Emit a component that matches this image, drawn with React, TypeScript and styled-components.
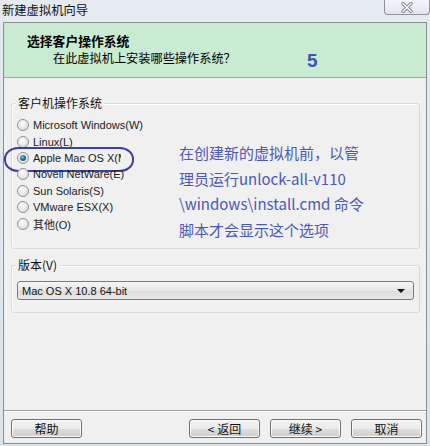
import React from "react";
import styled, { createGlobalStyle } from "styled-components";

const Global = createGlobalStyle`
  html, body { margin: 0; padding: 0; background: #dfe6ed; }
  body { width: 430px; height: 446px; overflow: hidden; }
  * { box-sizing: border-box; }
`;

const UI = `"Liberation Sans", "Noto Sans CJK SC", sans-serif`;
const CJK = `"Noto Sans CJK SC", "Liberation Sans", sans-serif`;

const Window = styled.div`
  width: 430px;
  height: 446px;
  display: flex;
  flex-direction: column;
  background: linear-gradient(#e4eaf0, #dbe3eb);
  font-family: ${UI};
  color: #000;
`;

const TitleBar = styled.div`
  height: 22px;
  display: flex;
  align-items: flex-start;
  padding-left: 2px;
`;

const TitleText = styled.div`
  font-family: ${CJK};
  font-size: 12.3px;
  line-height: 20px;
  color: #111;
`;

const CloseBtn = styled.div`
  margin-left: auto;
  width: 46px;
  height: 15px;
  border: 1px solid #8d939b;
  border-top: none;
  border-radius: 0 0 4px 4px;
  background: linear-gradient(#f4f6f8, #e2e6ea);
  display: flex;
  align-items: center;
  justify-content: center;
`;

const Frame = styled.div`
  flex: 1;
  margin: 0 3px 2px 3px;
  border: 1px solid #8a8f96;
  background: #f0f0f0;
  display: flex;
  flex-direction: column;
`;

const Header = styled.div`
  height: 55px;
  background: #c9ebd2;
  border-bottom: 1px solid #a3a8a5;
  padding: 10px 0 0 23px;
  display: flex;
  flex-direction: column;
`;

const HeaderTitle = styled.div`
  font-family: ${CJK};
  font-weight: bold;
  font-size: 12.8px;
  line-height: 15px;
`;

const HeaderSubRow = styled.div`
  display: flex;
  align-items: center;
  padding-left: 26px;
  height: 20px;
`;

const HeaderSub = styled.div`
  font-family: ${CJK};
  font-size: 12.2px;
  width: 254px;
`;

const StepNumber = styled.div`
  font-family: "Liberation Sans", sans-serif;
  font-weight: bold;
  font-size: 19px;
  color: #3b55b4;
  margin-top: 6px;
`;

const Body = styled.div`
  flex: 1;
  padding: 25px 6px 0 7px;
  display: flex;
  flex-direction: column;
  gap: 16px;
`;

const GroupBox = styled.div<{ $pt: number; $pb: number }>`
  position: relative;
  border: 1px solid #d3d9de;
  border-radius: 3px;
  box-shadow: inset 1px 1px 0 #ffffff;
  padding: ${(p) => p.$pt}px 5px ${(p) => p.$pb}px 5px;
`;

const Legend = styled.div`
  position: absolute;
  top: -9px;
  left: 4px;
  padding: 0 2px;
  background: #f0f0f0;
  font-family: ${CJK};
  font-size: 12px;
  line-height: 16px;
  color: #111;
`;

const GuestRow = styled.div`
  display: flex;
`;

const RadioList = styled.div`
  width: 162px;
  display: flex;
  flex-direction: column;
`;

const RadioRow = styled.div`
  position: relative;
  height: 16.4px;
  display: flex;
  align-items: center;
  gap: 4px;
  font-size: 11px;
  white-space: nowrap;
`;

const RadioCircle = styled.span<{ $checked?: boolean }>`
  width: 12px;
  height: 12px;
  border-radius: 50%;
  border: 1px solid #8f9397;
  background: radial-gradient(circle at 40% 35%, #fdfdfd 0%, #e6e7e8 55%, #cfd1d3 100%);
  display: flex;
  align-items: center;
  justify-content: center;
  flex-shrink: 0;
  &::after {
    content: "";
    display: ${(p) => (p.$checked ? "block" : "none")};
    width: 6px;
    height: 6px;
    border-radius: 50%;
    background: radial-gradient(circle at 40% 35%, #7fd6f0 0%, #1d6f99 45%, #0c3b5e 100%);
  }
`;

const RadioLabel = styled.span<{ $clip?: boolean }>`
  font-family: ${UI};
  color: #1a1a1a;
  overflow: hidden;
  max-width: ${(p) => (p.$clip ? "88px" : "none")};
`;

const Highlight = styled.div`
  position: absolute;
  left: -13px;
  top: -3px;
  width: 130px;
  height: 25px;
  border: 2.5px solid #3d409d;
  border-radius: 14px / 12px;
  pointer-events: none;
`;

const Note = styled.div`
  padding-top: 23px;
  font-family: ${CJK};
  font-size: 15px;
  line-height: 25.6px;
  color: #4b58b6;
  white-space: nowrap;
`;

const Select = styled.div`
  height: 19px;
  border: 1px solid #7a7a7a;
  border-radius: 3px;
  background: linear-gradient(#f6f6f6, #e6e6e6 50%, #dcdcdc 51%, #e8e8e8);
  display: flex;
  align-items: center;
  padding: 0 5px 0 4px;
  font-size: 11px;
  color: #111;
`;

const SelectText = styled.span`
  flex: 1;
`;

const Arrow = styled.span`
  width: 0;
  height: 0;
  border-left: 4px solid transparent;
  border-right: 4px solid transparent;
  border-top: 4px solid #111;
  margin-right: 3px;
`;

const Footer = styled.div`
  border-top: 1px solid #a0a0a0;
  box-shadow: inset 0 1px 0 #ffffff;
  padding: 8px 4px 5px 7px;
  display: flex;
  gap: 10px;
`;

const Button = styled.div<{ $push?: boolean }>`
  width: 71px;
  height: 19px;
  border: 1px solid #707070;
  border-radius: 3px;
  background: linear-gradient(#f2f2f2, #ebebeb 50%, #dddddd 51%, #cfcfcf);
  box-shadow: inset 0 0 0 1px #fbfbfb;
  display: flex;
  align-items: center;
  justify-content: center;
  font-family: ${CJK};
  font-size: 12px;
  color: #111;
  margin-left: ${(p) => (p.$push ? "auto" : "0")};
`;

const options = [
  "Microsoft Windows(W)",
  "Linux(L)",
  "Apple Mac OS X(M",
  "Novell NetWare(E)",
  "Sun Solaris(S)",
  "VMware ESX(X)",
  "其他(O)",
];

export default function App() {
  return (
    <>
      <Global />
      <Window>
        <TitleBar>
          <TitleText>新建虚拟机向导</TitleText>
          <CloseBtn>
            <svg width="14" height="11" viewBox="0 0 14 11">
              <path d="M3 1.5 L11 9.5 M11 1.5 L3 9.5" stroke="#7d8590" strokeWidth="3.2" strokeLinecap="round" />
              <path d="M3 1.5 L11 9.5 M11 1.5 L3 9.5" stroke="#ffffff" strokeWidth="1.4" strokeLinecap="round" />
            </svg>
          </CloseBtn>
        </TitleBar>
        <Frame>
          <Header>
            <HeaderTitle>选择客户操作系统</HeaderTitle>
            <HeaderSubRow>
              <HeaderSub>在此虚拟机上安装哪些操作系统？</HeaderSub>
              <StepNumber>5</StepNumber>
            </HeaderSubRow>
          </Header>
          <Body>
            <GroupBox $pt={13} $pb={6}>
              <Legend>客户机操作系统</Legend>
              <GuestRow>
                <RadioList>
                  {options.map((o, i) => (
                    <RadioRow key={o}>
                      <RadioCircle $checked={i === 2} />
                      <RadioLabel $clip={i === 2}>{o}</RadioLabel>
                      {i === 2 && <Highlight />}
                    </RadioRow>
                  ))}
                </RadioList>
                <Note>
                  <div>在创建新的虚拟机前，以管</div>
                  <div>理员运行unlock-all-v110</div>
                  <div>\windows\install.cmd 命令</div>
                  <div>脚本才会显示这个选项</div>
                </Note>
              </GuestRow>
            </GroupBox>
            <GroupBox $pt={15} $pb={12}>
              <Legend>版本(V)</Legend>
              <Select>
                <SelectText>Mac OS X 10.8 64-bit</SelectText>
                <Arrow />
              </Select>
            </GroupBox>
          </Body>
          <Footer>
            <Button>帮助</Button>
            <Button $push>&lt; 返回</Button>
            <Button>继续 &gt;</Button>
            <Button>取消</Button>
          </Footer>
        </Frame>
      </Window>
    </>
  );
}
